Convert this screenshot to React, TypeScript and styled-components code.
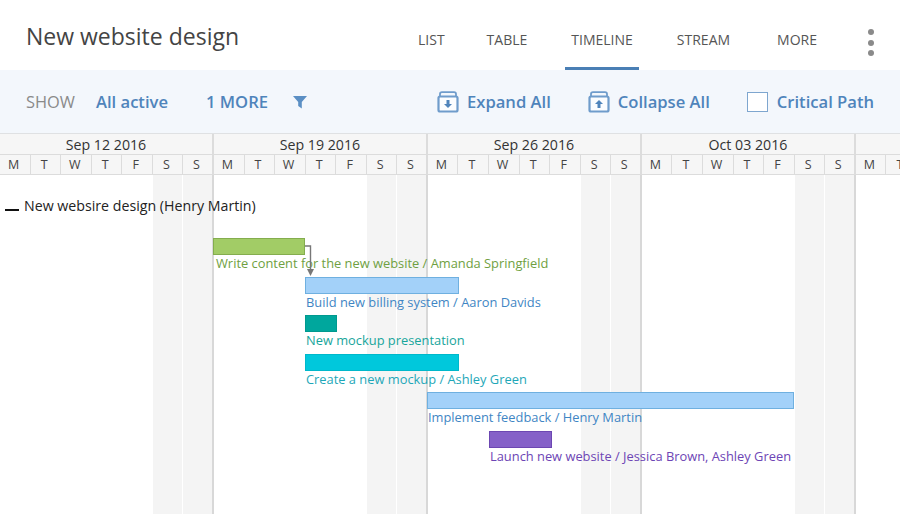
import React from 'react';
import styled, { createGlobalStyle } from 'styled-components';

const GlobalStyle = createGlobalStyle`
  html, body {
    margin: 0;
    padding: 0;
    background: #fff;
    overflow: hidden;
  }
  body {
    font-family: 'Open Sans', 'Liberation Sans', sans-serif;
  }
`;

const DAY_WIDTH = 30.57;
const WEEK_WIDTH = DAY_WIDTH * 7;
const DAY_LETTERS = ['M', 'T', 'W', 'T', 'F', 'S', 'S'];

const Page = styled.div`
  width: 900px;
  height: 514px;
  overflow: hidden;
  display: flex;
  flex-direction: column;
`;

const Header = styled.header`
  height: 70px;
  display: flex;
  align-items: stretch;
  justify-content: space-between;
  padding-left: 26px;
`;

const Title = styled.h1`
  margin: 0;
  padding-top: 20px;
  font-size: 23px;
  line-height: 33px;
  font-weight: 400;
  color: #444;
`;

const Tabs = styled.nav`
  display: flex;
  align-items: stretch;
  padding-right: 26px;
`;

const Tab = styled.a<{ $active?: boolean; $gap: number }>`
  display: block;
  margin-left: ${(p) => p.$gap}px;
  padding: 30px 6px 0;
  box-sizing: border-box;
  font-size: 14px;
  line-height: 19px;
  color: #555;
  border-bottom: 3px solid ${(p) => (p.$active ? '#4a7fb5' : 'transparent')};
`;

const Dots = styled.div`
  display: flex;
  flex-direction: column;
  gap: 4.5px;
  padding: 29px 0 0 45px;
`;

const Dot = styled.span`
  width: 6px;
  height: 6px;
  border-radius: 50%;
  background: #8a8a8a;
`;

const Toolbar = styled.div`
  height: 64px;
  box-sizing: border-box;
  display: flex;
  align-items: center;
  padding-left: 26px;
  background: #f3f7fc;
  border-bottom: 1px solid #dfe1e3;
  font-size: 16.6px;
`;

const ShowLabel = styled.span`
  font-size: 16.4px;
  color: #8a8a8a;
  margin-right: 21px;
`;

const ToolLink = styled.span<{ $gap: number }>`
  font-weight: 600;
  color: #4f84bb;
  margin-right: ${(p) => p.$gap}px;
  display: flex;
  align-items: center;
`;

const ToolIcon = styled.svg`
  display: block;
  margin-right: 8px;
`;

const Checkbox = styled.span`
  width: 21px;
  height: 20px;
  box-sizing: border-box;
  margin-right: 9px;
  background: #fff;
  border: 1.5px solid #7ea6cf;
`;

const Scale = styled.div`
  display: flex;
  width: 1000px;
  background: #f6f6f6;
`;

const MonthCell = styled.div`
  width: ${WEEK_WIDTH}px;
  flex: none;
  box-sizing: border-box;
  height: 21px;
  line-height: 22px;
  text-align: center;
  font-size: 14.2px;
  color: #333;
  border-right: 2px solid #dcdcdc;
  border-bottom: 1px solid #dcdcdc;
`;

const DayCell = styled.div<{ $weekEnd: boolean }>`
  width: ${DAY_WIDTH}px;
  flex: none;
  box-sizing: border-box;
  height: 20px;
  line-height: 19px;
  padding-right: 2.5px;
  text-align: center;
  font-size: 12.5px;
  color: #444;
  border-right: ${(p) => (p.$weekEnd ? 2 : 1)}px solid #dcdcdc;
  border-bottom: 1px solid #dcdcdc;
`;

const Chart = styled.div`
  position: relative;
  flex: 1;
`;

const GridLayer = styled.div`
  position: absolute;
  inset: 0;
  display: flex;
  width: 1000px;
`;

const GridDay = styled.div<{ $kind: 'plain' | 'sat' | 'sun' }>`
  width: ${DAY_WIDTH}px;
  flex: none;
  box-sizing: border-box;
  background: ${(p) => (p.$kind === 'plain' ? 'transparent' : '#f4f4f4')};
  border-right: ${(p) =>
    p.$kind === 'sun'
      ? '2px solid #d8d8d8'
      : p.$kind === 'sat'
        ? '1px solid #fff'
        : 'none'};
`;

const Rows = styled.div`
  position: relative;
  padding-top: 21px;
`;

const GroupRow = styled.div`
  display: flex;
  align-items: center;
  height: 18px;
  margin-bottom: 24px;
  font-size: 14.2px;
  color: #222;
`;

const Dash = styled.span`
  width: 14px;
  height: 2px;
  margin: 9px 5px 0 5px;
  background: #111;
`;

const Task = styled.div<{ $left: number }>`
  height: 38.6px;
  margin-left: ${(p) => p.$left}px;
`;

const Bar = styled.div<{ $width: number; $fill: string; $edge: string }>`
  width: ${(p) => p.$width}px;
  height: 17px;
  box-sizing: border-box;
  background: ${(p) => p.$fill};
  border: 1px solid ${(p) => p.$edge};
`;

const TaskLabel = styled.div<{ $color: string; $indent: number }>`
  padding-left: ${(p) => p.$indent}px;
  font-size: 12.87px;
  line-height: 16px;
  white-space: nowrap;
  color: ${(p) => p.$color};
`;

const Link = styled.svg`
  position: absolute;
  left: 304px;
  top: 70px;
`;

const weeks = ['Sep 12 2016', 'Sep 19 2016', 'Sep 26 2016', 'Oct 03 2016', ''];
const days = Array.from({ length: 31 }, (_, i) => i);

const tasks = [
  { left: 213, width: 92, indent: 3, fill: '#a2cc66', edge: '#84ad4e', color: '#6f9f42', label: 'Write content for the new website / Amanda Springfield' },
  { left: 305, width: 154, indent: 1, fill: '#a3d1f9', edge: '#6fb0e0', color: '#3f86c4', label: 'Build new billing system / Aaron Davids' },
  { left: 305, width: 32, indent: 1, fill: '#00a79d', edge: '#00998f', color: '#17a59b', label: 'New mockup presentation' },
  { left: 305, width: 154, indent: 1, fill: '#00c8dc', edge: '#00b8cb', color: '#1ea7b8', label: 'Create a new mockup / Ashley Green' },
  { left: 427, width: 367, indent: 1, fill: '#a3d1f9', edge: '#6fb0e0', color: '#3f86c4', label: 'Implement feedback / Henry Martin' },
  { left: 489, width: 63, indent: 1, fill: '#8561c8', edge: '#6c47b2', color: '#6d45b5', label: 'Launch new website / Jessica Brown, Ashley Green' },
];

const BoxIcon: React.FC<{ up?: boolean }> = ({ up }) => (
  <ToolIcon width="22" height="22" viewBox="0 0 22 22" fill="none">
    <path d="M3 5V3C3 2 3.9 1.2 5 1.2H17C18.1 1.2 19 2 19 3V5" stroke="#6f9ccb" strokeWidth="1.8" />
    <rect x="1.5" y="5.5" width="19" height="15" rx="1.5" fill="#fbfdff" stroke="#6f9ccb" strokeWidth="2.2" />
    {up ? (
      <path d="M11 9L15 13H12.5V17H9.5V13H7L11 9Z" fill="#4f84bb" />
    ) : (
      <path d="M11 17L15 13H12.5V9H9.5V13H7L11 17Z" fill="#4f84bb" />
    )}
  </ToolIcon>
);

const App: React.FC = () => (
  <Page>
    <GlobalStyle />
    <Header>
      <Title>New website design</Title>
      <Tabs>
        <Tab $gap={0}>LIST</Tab>
        <Tab $gap={30}>TABLE</Tab>
        <Tab $gap={32} $active>TIMELINE</Tab>
        <Tab $gap={32}>STREAM</Tab>
        <Tab $gap={35}>MORE</Tab>
        <Dots>
          <Dot />
          <Dot />
          <Dot />
        </Dots>
      </Tabs>
    </Header>
    <Toolbar>
      <ShowLabel>SHOW</ShowLabel>
      <ToolLink $gap={38}>All active</ToolLink>
      <ToolLink $gap={25}>1 MORE</ToolLink>
      <ToolLink $gap={130}>
        <svg width="14" height="14" viewBox="0 0 14 14">
          <path d="M0 1H14L8.8 7V13.5L5.2 11V7L0 1Z" fill="#5b8fc4" />
        </svg>
      </ToolLink>
      <ToolLink $gap={37}>
        <BoxIcon />
        Expand All
      </ToolLink>
      <ToolLink $gap={37}>
        <BoxIcon up />
        Collapse All
      </ToolLink>
      <ToolLink $gap={0}>
        <Checkbox />
        Critical Path
      </ToolLink>
    </Toolbar>
    <Scale>
      {weeks.map((w, i) => (
        <MonthCell key={i}>{w}</MonthCell>
      ))}
    </Scale>
    <Scale>
      {days.map((d) => (
        <DayCell key={d} $weekEnd={d % 7 === 6}>
          {DAY_LETTERS[d % 7]}
        </DayCell>
      ))}
    </Scale>
    <Chart>
      <GridLayer>
        {days.map((d) => (
          <GridDay key={d} $kind={d % 7 === 5 ? 'sat' : d % 7 === 6 ? 'sun' : 'plain'} />
        ))}
      </GridLayer>
      <Rows>
        <GroupRow>
          <Dash />
          New websire design (Henry Martin)
        </GroupRow>
        {tasks.map((t) => (
          <Task key={t.label} $left={t.left}>
            <Bar $width={t.width} $fill={t.fill} $edge={t.edge} />
            <TaskLabel $color={t.color} $indent={t.indent}>{t.label}</TaskLabel>
          </Task>
        ))}
        <Link width="14" height="33" viewBox="0 0 14 33" fill="none">
          <path d="M1 1H6.5V26" stroke="#777" strokeWidth="1.4" />
          <path d="M3 24H10L6.5 31Z" fill="#777" />
        </Link>
      </Rows>
    </Chart>
  </Page>
);

export default App;
